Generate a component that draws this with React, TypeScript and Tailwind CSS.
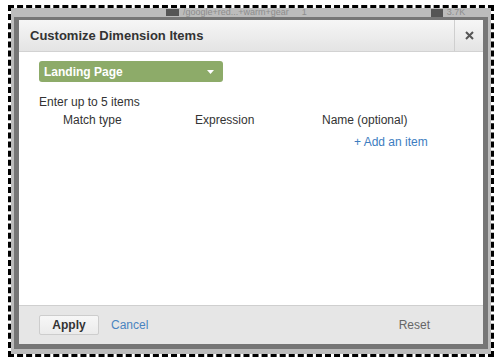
import React from "react";

export default function App() {
  return (
    <div
      className="w-[503px] h-[364px] bg-white overflow-hidden"
      style={{ fontFamily: '"Liberation Sans", Arial, sans-serif' }}
    >
      <div className="ml-[8px] mt-[5px] w-[486px] h-[352px] border-[3px] border-dashed border-black">
        <div className="w-full h-full bg-[#bcbcbc] flex flex-col pl-[3px] pr-[3px] pb-[5px]">
          <div className="h-[9px] flex items-center pl-[152px] gap-[4px] text-[9px] leading-[9px] text-[#8d8d8d]">
            <div className="w-[13px] h-[7px] bg-[#555]" />
            <span>/google+red...+warm+gear</span>
            <div className="w-[5px]" />
            <span>1</span>
            <div className="ml-[120px] w-[12px] h-[8px] bg-[#555]" />
            <span>3.7K</span>
          </div>
          <div className="flex-1 flex flex-col border-t-[3px] border-x-[5px] border-b-[5px] border-[#767676] bg-white">
            <div className="h-[32px] flex items-stretch border-b border-[#d2d2d2] bg-gradient-to-b from-[#f6f6f6] to-[#e4e4e4]">
              <div className="flex-1 flex items-center pl-[11px] text-[13px] font-bold text-[#333]">
                Customize Dimension Items
              </div>
              <div className="w-[29px] border-l border-[#cfcfcf] flex items-center justify-center">
                <svg width="9" height="9" viewBox="0 0 9 9">
                  <path d="M1 1 L8 8 M8 1 L1 8" stroke="#555" strokeWidth="2" />
                </svg>
              </div>
            </div>
            <div className="flex-1 flex flex-col pl-[20px] pt-[9px]">
              <div className="w-[184px] h-[21px] rounded-[3px] bg-[#8dab69] flex items-center justify-between pl-[5px] pr-[9px]">
                <span className="text-[12px] font-bold text-white">Landing Page</span>
                <svg width="7" height="4" viewBox="0 0 7 4">
                  <path d="M0 0 L7 0 L3.5 4 Z" fill="#ffffff" />
                </svg>
              </div>
              <div className="mt-[13px] text-[12px] leading-[14px] text-[#333]">Enter up to 5 items</div>
              <div className="mt-[4px] flex text-[12px] leading-[14px] text-[#333]">
                <span className="ml-[24px] w-[132px]">Match type</span>
                <span className="w-[127px]">Expression</span>
                <span>Name (optional)</span>
              </div>
              <div className="mt-[8px] pl-[315px] text-[12px] leading-[14px] text-[#3d7dbf]">+ Add an item</div>
            </div>
            <div className="h-[39px] border-t border-[#cfcfcf] bg-[#e6e6e6] flex items-center pl-[20px] pr-[53px]">
              <div className="w-[60px] h-[20px] border border-[#cdcdcd] rounded-[2px] bg-gradient-to-b from-[#f7f7f7] to-[#ebebeb] flex items-center justify-center text-[12px] font-bold text-[#333]">
                Apply
              </div>
              <span className="ml-[12px] text-[12px] text-[#4a84c0]">Cancel</span>
              <span className="ml-auto text-[12px] text-[#666]">Reset</span>
            </div>
          </div>
        </div>
      </div>
    </div>
  );
}
